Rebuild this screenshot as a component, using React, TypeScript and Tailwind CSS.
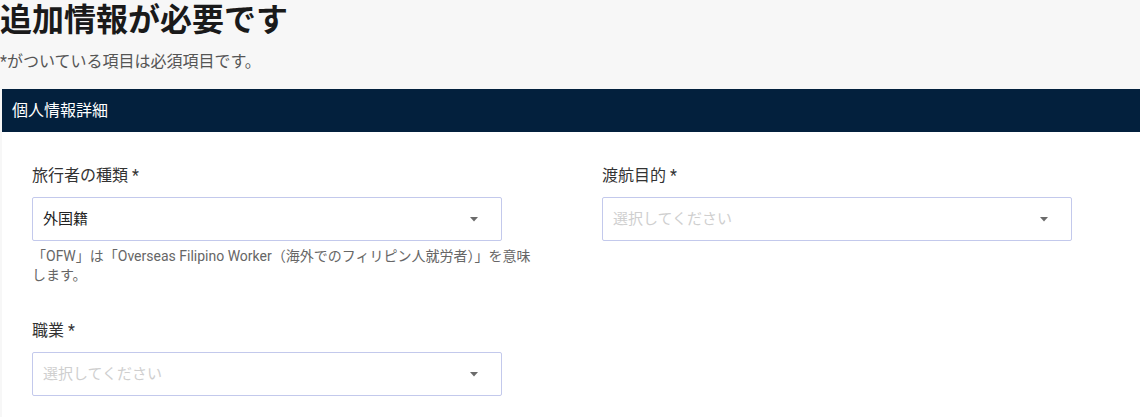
import React from 'react';

function Caret() {
  return (
    <svg width="10" height="5" viewBox="0 0 10 5" className="shrink-0">
      <path d="M1 0 L9 0 L5 4.5 Z" fill="#6b6b6b" />
    </svg>
  );
}

function SelectBox({ value, placeholder }: { value?: string; placeholder: string }) {
  return (
    <div className="flex h-[44px] w-[470px] items-center justify-between rounded-[2px] border border-[#c3c9ec] bg-white pl-[10px] pr-[22px]">
      {value ? (
        <span className="text-[15px] text-[#222]">{value}</span>
      ) : (
        <span className="text-[15px] text-[#cfcfcf]">{placeholder}</span>
      )}
      <Caret />
    </div>
  );
}

function Field({
  label,
  value,
  help,
}: {
  label: string;
  value?: string;
  help?: string;
}) {
  return (
    <div className="flex flex-col">
      <label className="mb-[9px] h-[24px] text-[16px] leading-[24px] text-[#333]">{label}</label>
      <SelectBox value={value} placeholder="選択してください" />
      {help ? (
        <p className="mt-[6px] w-[512px] text-[14px] leading-[19px] text-[#666]">{help}</p>
      ) : null}
    </div>
  );
}

export default function App() {
  return (
    <main
      className="min-h-[417px] bg-[#f7f7f7]"
      style={{ fontFamily: "Roboto, 'Noto Sans CJK JP', sans-serif" }}
    >
      <h1 className="pt-[1px] text-[32px] font-bold leading-[38px] text-[#1a1a1a]">
        追加情報が必要です
      </h1>
      <p className="mt-[12px] text-[16px] leading-[22px] text-[#555]">
        *がついている項目は必須項目です。
      </p>

      <section className="ml-[2px] mt-[16px] bg-white">
        <div className="flex h-[43px] items-center bg-[#03203d] px-[10px]">
          <h2 className="text-[16px] text-white">個人情報詳細</h2>
        </div>
        <div className="grid grid-cols-[570px_1fr] gap-y-[34px] px-[30px] pt-[32px] pb-[40px]">
          <Field
            label="旅行者の種類 *"
            value="外国籍"
            help="「OFW」は「Overseas Filipino Worker（海外でのフィリピン人就労者）」を意味します。"
          />
          <Field label="渡航目的 *" />
          <Field label="職業 *" />
        </div>
      </section>
    </main>
  );
}
